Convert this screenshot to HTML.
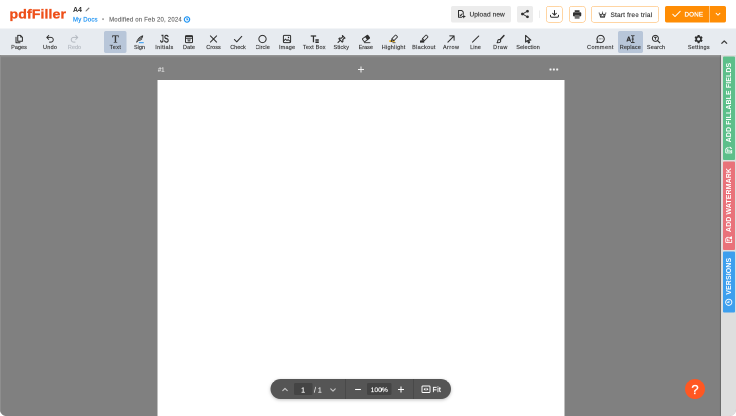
<!DOCTYPE html>
<html lang="en">
<head>
<meta charset="utf-8">
<title>pdfFiller</title>
<style>
html,body{margin:0;padding:0;width:736px;height:416px;overflow:hidden;background:#fff;}
#app{-webkit-text-stroke:.3px currentColor;will-change:transform;position:absolute;left:0;top:0;width:1472px;height:832px;transform:scale(.5);transform-origin:0 0;font-family:"Liberation Sans",sans-serif;color:#333;overflow:hidden;background:#808080;border-radius:0 0 13px 13px;}
#app *{box-sizing:border-box;}
.a{position:absolute;}
svg{display:block;overflow:visible;}
/* header */
#header{position:absolute;left:0;top:0;width:1472px;height:57px;background:#fff;}
#logo{position:absolute;left:19px;top:13.400px;font-size:26px;line-height:30px;font-weight:bold;letter-spacing:.200px;transform:scaleX(1.085);transform-origin:0 0;-webkit-text-stroke:.600px #ee4f19;color:#ee4f19;white-space:nowrap;}
#docname{position:absolute;left:146px;top:10px;font-size:14px;line-height:18px;font-weight:bold;color:#2b2b2b;white-space:nowrap;-webkit-text-stroke:0;}
#crumbs{position:absolute;left:146px;top:31px;font-size:12px;line-height:16px;white-space:nowrap;color:#6a6a6a;letter-spacing:.400px;}
#crumbs .lnk{color:#1a92f4;-webkit-text-stroke:.400px #1a92f4;}
#crumbs .dot{color:#9a9a9a;margin:0 10px 0 8.500px;letter-spacing:0}
.btn{position:absolute;top:12px;height:32.500px;border-radius:4px;background:#ececec;}
.btn.o{background:#fff;border:1.800px solid #ffac48;border-radius:5.500px;}
.btn span{position:absolute;top:9px;font-size:13px;line-height:16px;white-space:nowrap;color:#333;}
/* toolbar */
#toolbar{position:absolute;left:0;top:57px;width:1472px;height:52.500px;background:#e7ebf0;border-bottom:1px solid #eef1f5;}
.sel{position:absolute;top:5px;height:44px;border-radius:4px;background:#b8c6d9;}
.ti{position:absolute;top:0;width:0;height:52px;}
.ti svg{position:absolute;left:-9px;top:12px;width:18px;height:18px;}
.ti b{position:absolute;left:-60px;width:120px;top:31px;text-align:center;font-weight:normal;font-size:11px;line-height:12px;letter-spacing:.35px;color:#333;white-space:nowrap;}
.ti.dis b{color:#b3b8c0;}
.s{fill:none;stroke:#2e2e2e;stroke-width:2;stroke-linecap:round;stroke-linejoin:round;}
.f{fill:#2e2e2e;stroke:none;}
/* workspace */
#ws{position:absolute;left:0;top:109.500px;width:1443px;height:723px;background:#808080;box-shadow:inset 0 4px 4px -2px rgba(255,255,255,.250);}
#ledge{position:absolute;left:0;top:109.500px;width:2px;height:723px;background:#8e8e8e;}
#page{position:absolute;left:314.500px;top:159.600px;width:814px;height:700px;background:#fff;}
#pnum{position:absolute;left:316px;top:132px;font-size:11.5px;line-height:14px;color:#ededed;}
/* right panel */
#rp{position:absolute;left:1442px;top:109.500px;width:30px;height:723px;background:#dedede;box-shadow:-1px 0 2px rgba(0,0,0,.35);}
.tab{position:absolute;left:1446px;width:24px;border-radius:2px;}
.tab div{position:absolute;left:0;top:100%;height:24px;transform:rotate(-90deg);transform-origin:0 0;display:flex;align-items:center;justify-content:center;padding-bottom:1px;color:#fff;font-weight:bold;font-size:14px;line-height:23px;-webkit-text-stroke:0;letter-spacing:.200px;white-space:nowrap;}
.tab svg{width:15px;height:15px;margin-right:8px;flex:none;}
/* bottom bar */
#bb{position:absolute;left:541px;top:758px;width:361px;height:40px;border-radius:20px;background:#555;box-shadow:0 2px 6px rgba(0,0,0,.25);color:#fff;}
#bb .box{position:absolute;top:8px;height:24px;border-radius:3px;background:#444;text-align:center;font-size:14px;line-height:24px;}
#bb .box i{font-style:normal;position:relative;top:1.500px;}
#bb .dv{position:absolute;top:0;width:2px;height:40px;background:#494949;}
#bb .t{position:absolute;top:9.500px;font-size:14px;line-height:24px;white-space:nowrap;}
.w{fill:none;stroke:#fff;stroke-width:2.100;stroke-linecap:butt;stroke-linejoin:round;}
#help{position:absolute;left:1370px;top:758px;width:40px;height:40px;border-radius:20px;background:#ff5722;color:#fff;font-size:26px;line-height:43px;text-align:center;-webkit-text-stroke:.700px #fff;}
</style>
</head>
<body>
<div id="app">

<div id="ws"></div>
<div id="ledge"></div>
<div id="pnum">#1</div>
<svg class="a" style="left:715px;top:132px;width:14px;height:14px" viewBox="0 0 14 14"><path d="M7 1v12M1 7h12" stroke="#f2f2f2" stroke-width="2" fill="none"/></svg>
<svg class="a" style="left:1099px;top:137px;width:18px;height:4px" viewBox="0 0 18 4"><rect x="0" y="0" width="4" height="4" rx="1" fill="#f2f2f2"/><rect x="6.7" y="0" width="4" height="4" rx="1" fill="#f2f2f2"/><rect x="13.4" y="0" width="4" height="4" rx="1" fill="#f2f2f2"/></svg>
<div id="page"></div>

<div id="rp"></div>
<div class="tab" style="top:113px;height:207px;background:#5cbf8a"><div style="width:207px">
<svg viewBox="0 0 14 14"><path d="M2 1.5h7l2.5 2.5v3M2 1.5v11h5.5M4 5h5M4 7.5h4M4 10h2.5" fill="none" stroke="#fff" stroke-width="1.700"/><path d="M9 13l.5-2.2 3-3 1.6 1.6-3 3z" fill="#fff"/></svg>ADD FILLABLE FIELDS</div></div>
<div class="tab" style="top:323px;height:177px;background:#e9727a"><div style="width:177px">
<svg viewBox="0 0 14 14"><path d="M2 1.5h7l2.5 2.5v3M2 1.5v11h4.5M4 5h5M4 7.5h3" fill="none" stroke="#fff" stroke-width="1.700"/><path d="M10.5 6.5l3.3 6.5H7.2z" fill="#fff"/></svg>ADD WATERMARK</div></div>
<div class="tab" style="top:503px;height:122px;background:#3d9fee"><div style="width:122px">
<svg viewBox="0 0 14 14"><circle cx="7" cy="7" r="5.800" fill="none" stroke="#fff" stroke-width="1.700"/><path d="M7 3.600V7.400H9.800" fill="none" stroke="#fff" stroke-width="1.700"/></svg>VERSIONS</div></div>

<div id="header">
  <div id="logo">pdfFiller</div>
  <div id="docname">A4</div>
  <svg class="a" style="left:170px;top:14px;width:10px;height:10px" viewBox="0 0 10 10"><path d="M1 9l.500-2.100L7.600 .800l1.600 1.600-6.100 6.100z" fill="#777"/></svg>
  <div id="crumbs"><span class="lnk">My Docs</span><span class="dot">•</span>Modified on Feb 20, 2024</div>
  <svg class="a" style="left:367.300px;top:32px;width:14px;height:14px" viewBox="0 0 14 14"><circle cx="7" cy="7" r="5.300" fill="none" stroke="#1a92f4" stroke-width="2.300"/><path d="M7 3.800V7.400H9.600" fill="none" stroke="#1a92f4" stroke-width="2"/></svg>

  <div class="btn" style="left:902px;width:120px">
    <svg class="a" style="left:12px;top:7px;width:18px;height:18px" viewBox="0 0 18 18"><path class="s" d="M9.5 15.5H3V2h6.5l3 3v4.5M6 11l1.5 1.5L10 9M13.5 11.5v5M11 14h5"/></svg>
    <span style="left:37px;letter-spacing:.2px">Upload new</span>
  </div>
  <div class="btn" style="left:1034px;width:32px">
    <svg class="a" style="left:7px;top:7px;width:18px;height:18px" viewBox="0 0 18 18"><path class="s" style="stroke-width:1.700" d="M12.500 4L5 8.500M5 9.500L12.500 14"/><circle class="f" cx="14" cy="3.400" r="2.700"/><circle class="f" cx="3.800" cy="9" r="2.700"/><circle class="f" cx="14" cy="14.600" r="2.700"/></svg>
  </div>
  <div class="a" style="left:1078px;top:21px;width:1px;height:15px;background:#d9d9d9"></div>
  <div class="btn o" style="left:1092px;width:32.500px">
    <svg class="a" style="left:6px;top:6px;width:20px;height:18px" viewBox="0 0 20 18"><path class="s" d="M10 2v9M6.300 7.600L10 11.300L13.700 7.600M2 11.500v1.500a2.500 2.500 0 0 0 2.500 2.500h11A2.500 2.500 0 0 0 18 13v-1.500"/></svg>
  </div>
  <div class="btn o" style="left:1138px;width:32.500px">
    <svg class="a" style="left:6.500px;top:6.500px;width:16.500px;height:17.500px" viewBox="0 0 17 18"><path class="f" d="M3.500 .500h10v3.500h-10z"/><rect class="f" x="0" y="4.500" width="17" height="8.500" rx="2"/><path d="M3.500 10h10v8h-10z" fill="#6f6f6f"/></svg>
  </div>
  <div class="btn o" style="left:1182px;width:136px">
    <svg class="a" style="left:14px;top:9.500px;width:16px;height:13px" viewBox="0 0 16 13"><path class="s" style="stroke-width:1.700" d="M2.400 4.800l1.700 6.700h7.800l1.700-6.700-3.300 2.700L8 3.600 5.700 7.500z"/><path class="s" style="stroke-width:2.400;stroke-linecap:butt" d="M3.800 10.800h8.400"/><circle class="f" cx="8" cy="1.300" r="1.100"/><circle class="f" cx="1.300" cy="3" r="1.100"/><circle class="f" cx="14.700" cy="3" r="1.100"/></svg>
    <span style="left:38px;letter-spacing:.34px">Start free trial</span>
  </div>
  <div class="btn" style="left:1330px;width:89px;background:#ff8d04;border-radius:4px 0 0 4px">
    <svg class="a" style="left:14px;top:9px;width:18px;height:14px" viewBox="0 0 18 14"><path d="M1.500 7.500L6 12L16.500 1.500" fill="none" stroke="#fff" stroke-width="1.900" stroke-linecap="round" stroke-linejoin="round"/></svg>
    <span style="left:39px;color:#fff;font-size:12.500px;letter-spacing:.300px;-webkit-text-stroke:.500px #fff">DONE</span>
  </div>
  <div class="btn" style="left:1420px;width:32px;background:#ff8d04;border-radius:0 4px 4px 0">
    <svg class="a" style="left:11px;top:13px;width:10px;height:7px" viewBox="0 0 10 7"><path d="M1.200 1.500L5 5.300L8.800 1.500" fill="none" stroke="#fff" stroke-width="1.900" stroke-linecap="round" stroke-linejoin="round"/></svg>
  </div>
</div>

<div id="toolbar">
  <div class="sel" style="left:208px;width:45px"></div>
  <div class="sel" style="left:1236px;width:49.500px"></div>
  <div class="ti" style="left:38px"><svg viewBox="0 0 18 18"><path class="s" d="M6.500 1.800h5.500l3.800 3.800v7.900H6.500zM3 5.500v11h8"/><path class="f" d="M11.500 1.800l4.300 4.300h-4.300z"/></svg><b style="letter-spacing:0.05px;text-indent:0.05px">Pages</b></div>
  <div class="ti" style="left:100px"><svg viewBox="0 0 18 18"><path class="s" style="stroke-width:1.900" d="M6.500 1.800L2.500 5.800l4 4M2.500 5.800h8.300a4.700 4.700 0 0 1 0 9.400H8"/></svg><b style="letter-spacing:0.53px;text-indent:0.53px">Undo</b></div>
  <div class="ti dis" style="left:149px"><svg viewBox="0 0 18 18"><path class="s" style="stroke:#b3b8c0;stroke-width:1.900" d="M11.500 1.800l4 4-4 4M15.500 5.800H7.200a4.700 4.700 0 0 0 0 9.400H10"/></svg><b style="letter-spacing:0.00px;text-indent:0.00px">Redo</b></div>
  <div class="ti" style="left:230.500px"><svg viewBox="0 0 18 18"><text x="9" y="16.200" text-anchor="middle" font-family="Liberation Serif, serif" font-size="21" fill="#333" stroke="#333" stroke-width=".700">T</text></svg><b style="letter-spacing:0.80px;text-indent:0.80px">Text</b></div>
  <div class="ti" style="left:279px"><svg viewBox="0 0 18 18"><path class="f" d="M2.300 15.800C4 10 8 4 16.200 1.500c.300 3-.800 5.300-2.600 6.900l1.300.4c-1.600 2.600-4.400 3.800-7.800 3.600L3.600 16.200z"/><path d="M4.500 13L13 4.500M8 9.500h4.500M10 7.200h4" stroke="#e7ebf0" stroke-width=".800" fill="none"/><path d="M7.800 16.400h9.600" stroke="#1e90f0" stroke-width="1.900" fill="none"/></svg><b style="letter-spacing:0.00px;text-indent:0.00px">Sign</b></div>
  <div class="ti" style="left:328.500px"><svg viewBox="0 0 18 18"><text x="9" y="16.300" text-anchor="middle" font-family="Liberation Sans, sans-serif" font-size="21.500" textLength="17.500" lengthAdjust="spacingAndGlyphs" fill="#2e2e2e" stroke="#2e2e2e" stroke-width=".900">JS</text></svg><b style="letter-spacing:0.67px;text-indent:0.67px">Initials</b></div>
  <div class="ti" style="left:378px"><svg viewBox="0 0 18 18"><rect class="s" x="2" y="2.200" width="14" height="14" rx="1.600"/><path class="f" d="M2 2.200h14v3.300H2z"/><path class="s" style="stroke-width:1.600;stroke-linecap:butt" d="M2 8h14M5.500 10.800h7M7.500 10.800v3.500M10.500 10.800v3.500"/></svg><b style="letter-spacing:0.18px;text-indent:0.18px">Date</b></div>
  <div class="ti" style="left:427px"><svg viewBox="0 0 18 18"><path class="s" d="M2.800 2.800l12.400 12.400M15.200 2.800L2.800 15.200"/></svg><b style="letter-spacing:0.09px;text-indent:0.09px">Cross</b></div>
  <div class="ti" style="left:476px"><svg viewBox="0 0 18 18"><path class="s" d="M1.800 10l4.700 4.700L16.500 3.800"/></svg><b style="letter-spacing:0.00px;text-indent:0.00px">Check</b></div>
  <div class="ti" style="left:525px"><svg viewBox="0 0 18 18"><circle class="s" cx="9" cy="9" r="7.300"/></svg><b style="letter-spacing:0.20px;text-indent:0.20px">Circle</b></div>
  <div class="ti" style="left:574px"><svg viewBox="0 0 18 18"><rect class="s" x="1.800" y="1.800" width="14.400" height="14.400" rx="2"/><path class="s" style="stroke-width:1.800" d="M2.200 13l3.800-3.800 3 3 2-2 4.800 3.800"/><circle class="f" cx="12" cy="6" r="1.400"/></svg><b style="letter-spacing:0.38px;text-indent:0.38px">Image</b></div>
  <div class="ti" style="left:628.500px"><svg viewBox="0 0 18 18"><path class="s" style="stroke-width:2.500;stroke-linecap:butt" d="M1.500 3h10.800M6.900 3v12.500"/><path class="s" style="stroke-width:2.100;stroke-linecap:butt" d="M10.800 10.600h6.800M10.800 13.300h6.800M10.800 16h6.800"/></svg><b style="letter-spacing:0.44px;text-indent:0.44px">Text Box</b></div>
  <div class="ti" style="left:682.500px"><svg viewBox="0 0 18 18"><path class="s" style="stroke-width:2.200" d="M10.800 2l5.200 5.200-1.800.4-2.700 2.700.3 3.700-1.300 1.300L3.700 8.500 5 7.200l3.700.3 2.700-2.700zM6.800 11.200L2 16"/></svg><b style="letter-spacing:0.29px;text-indent:0.29px">Sticky</b></div>
  <div class="ti" style="left:731.500px"><svg viewBox="0 0 18 18"><g transform="rotate(-36 9 8)"><rect class="s" style="stroke-width:1.800" x="2.300" y="4.200" width="13.400" height="7.600" rx="1.600"/><path class="f" d="M9.300 4.200h5.400a1 1 0 0 1 1 1v5.600a1 1 0 0 1-1 1H9.300z"/></g><path class="s" style="stroke-width:1.700" d="M5.500 16.300h11.500"/></svg><b style="letter-spacing:0.00px;text-indent:0.00px">Erase</b></div>
  <div class="ti" style="left:787px"><svg viewBox="0 0 18 18"><path d="M.500 11.300h11v3.800h-11z" fill="#fbc02d"/><path d="M7 16.500h6" stroke="#2e2e2e" stroke-width="1.500" fill="none"/><path class="s" style="stroke-width:1.700" d="M12.400 1.500a1.200 1.200 0 0 1 1.700 0l2.400 2.400a1.200 1.200 0 0 1 0 1.700L9.700 12.400l-3.500.500-1.300 1.300-1-1 1.300-1.300.5-3.500zM6.200 8.500l3.300 3.300"/></svg><b style="letter-spacing:0.55px;text-indent:0.55px">Highlight</b></div>
  <div class="ti" style="left:847.500px"><svg viewBox="0 0 18 18"><path d="M1 12h8.500v4.300H1z" fill="#2e2e2e"/><path class="s" style="stroke-width:1.700" d="M12.400 1.500a1.200 1.200 0 0 1 1.700 0l2.400 2.400a1.200 1.200 0 0 1 0 1.700L9.700 12.400l-3.500.500-1.300 1.300-1-1 1.300-1.300.5-3.500zM6.200 8.500l3.300 3.300"/></svg><b style="letter-spacing:0.63px;text-indent:0.63px">Blackout</b></div>
  <div class="ti" style="left:902px"><svg viewBox="0 0 18 18"><path class="s" d="M2.800 15.200L15 3M6.500 2.800h8.700v8.700"/></svg><b style="letter-spacing:0.84px;text-indent:0.84px">Arrow</b></div>
  <div class="ti" style="left:951px"><svg viewBox="0 0 18 18"><path class="s" d="M3 15.200L15.500 3"/></svg><b style="letter-spacing:0.20px;text-indent:0.20px">Line</b></div>
  <div class="ti" style="left:1000.500px"><svg viewBox="0 0 18 18"><path class="s" style="stroke-width:3.100" d="M15.800 2.200L9.300 9.200"/><path class="s" style="stroke-width:1.900" d="M6.500 10a3.200 3.200 0 0 1 3 3.200c0 2.500-3 3.500-7.500 3.300 1.500-1 1.300-2.200 1.500-3.500A3.200 3.200 0 0 1 6.500 10z"/></svg><b style="letter-spacing:0.91px;text-indent:0.91px">Draw</b></div>
  <div class="ti" style="left:1056px"><svg viewBox="0 0 18 18"><path class="s" style="stroke-width:2.100" d="M4.200 1.800v13.400l3.500-3.200 2.300 5 2.200-1-2.300-4.800h4.800z"/></svg><b style="letter-spacing:0.24px;text-indent:0.24px">Selection</b></div>
  <div class="ti" style="left:1200.500px"><svg viewBox="0 0 18 18"><path class="s" d="M9.300 1.800a7.200 7.200 0 1 1-3.600 13.430L1.800 16.200l1.100-3.700A7.200 7.200 0 0 1 9.300 1.800z"/><circle cx="6.500" cy="8.800" r="1" fill="#555"/><circle cx="9.300" cy="8.800" r="1" fill="#555"/><circle cx="12.100" cy="8.800" r="1" fill="#555"/></svg><b style="letter-spacing:0.85px;text-indent:0.85px">Comment</b></div>
  <div class="ti" style="left:1260.500px"><svg viewBox="0 0 18 18"><path class="s" style="stroke-width:2.200;stroke-linecap:butt;stroke-linejoin:miter" d="M1.800 14.200L5.100 5h.800l3.300 9.200M3 11.300h5"/><path class="s" style="stroke-width:1.800" d="M10.800 2.300h1.200a1.600 1.600 0 0 1 1.600 1.600 1.600 1.600 0 0 1 1.600-1.600h1.200M10.800 16h1.200a1.600 1.600 0 0 0 1.600-1.600 1.600 1.600 0 0 0 1.600 1.600h1.200M13.600 3.800v10.700M12.200 9.200h2.800"/></svg><b style="letter-spacing:0.29px;text-indent:0.29px">Replace</b></div>
  <div class="ti" style="left:1312px"><svg viewBox="0 0 18 18"><circle class="s" cx="7.800" cy="7.800" r="6"/><path class="s" style="stroke-width:2.300" d="M12.500 12.500l4 4"/><path class="s" style="stroke-width:1.800;stroke-linecap:butt" d="M5 5.500h5.600M7.800 5.500v5"/></svg><b style="letter-spacing:0.29px;text-indent:0.29px">Search</b></div>
  <div class="ti" style="left:1397.500px"><svg style="left:-8.200px;top:13px;width:16.400px;height:16.400px" viewBox="2.400 2.400 19.200 19.200"><path class="f" d="M19.140 12.940c.04-.3.060-.61.060-.94 0-.32-.02-.64-.07-.94l2.030-1.580c.18-.14.230-.41.120-.61l-1.920-3.320c-.12-.22-.37-.29-.59-.22l-2.390.96c-.5-.38-1.030-.7-1.620-.94l-.36-2.540c-.04-.24-.24-.41-.48-.41h-3.840c-.24 0-.43.170-.47.410l-.36 2.540c-.59.240-1.130.570-1.620.940l-2.390-.96c-.22-.08-.47 0-.59.220L2.740 8.870c-.12.210-.08.470.12.610l2.030 1.580c-.05.300-.09.630-.09.940s.02.640.07.940l-2.030 1.580c-.18.140-.23.410-.12.610l1.920 3.320c.12.220.37.290.59.220l2.390-.96c.5.380 1.030.7 1.620.94l.36 2.540c.05.240.24.410.48.410h3.840c.24 0 .44-.17.470-.41l.36-2.540c.59-.24 1.130-.56 1.620-.94l2.390.96c.22.080.47 0 .59-.22l1.920-3.320c.12-.22.070-.47-.12-.61l-2.010-1.580zM12 15.600c-1.980 0-3.600-1.620-3.600-3.600s1.620-3.600 3.600-3.600 3.600 1.620 3.600 3.600-1.620 3.600-3.600 3.600z"/></svg><b style="letter-spacing:0.54px;text-indent:0.54px">Settings</b></div>
  <svg class="a" style="left:1441.500px;top:22.500px;width:13px;height:8px" viewBox="0 0 13 8"><path d="M1.600 6.700L6.500 1.800l4.900 4.900" fill="none" stroke="#3a3a3a" stroke-width="2.400" stroke-linecap="round" stroke-linejoin="round"/></svg>
</div>

<div id="bb">
  <svg class="a" style="left:22.500px;top:17px;width:12px;height:8px" viewBox="0 0 12 8"><path d="M1.500 6.300L6 1.800L10.500 6.300" fill="none" stroke="#c4c4c4" stroke-width="2.300" stroke-linecap="round" stroke-linejoin="round"/></svg>
  <div class="box" style="left:47px;width:36.500px"><i>1</i></div>
  <div class="t" style="left:87px;color:#ececec">/ 1</div>
  <svg class="a" style="left:118.500px;top:17.500px;width:12px;height:8px" viewBox="0 0 12 8"><path d="M1.500 1.700L6 6.200L10.500 1.700" fill="none" stroke="#c4c4c4" stroke-width="2.300" stroke-linecap="round" stroke-linejoin="round"/></svg>
  <div class="dv" style="left:149px"></div>
  <svg class="a" style="left:168px;top:13.500px;width:14px;height:14px" viewBox="0 0 14 14"><path class="w" d="M1.200 7h11.600"/></svg>
  <div class="box" style="left:193px;width:49px;font-size:13.500px"><i>100%</i></div>
  <svg class="a" style="left:254px;top:13.500px;width:14px;height:14px" viewBox="0 0 14 14"><path class="w" d="M1 7h12M7 1v12"/></svg>
  <div class="dv" style="left:285px"></div>
  <svg class="a" style="left:302px;top:13px;width:18px;height:15px" viewBox="0 0 18 15"><rect x="1" y="1" width="16" height="13" rx="1.500" fill="none" stroke="#fff" stroke-width="1.900"/><path d="M7.800 4.200v6.600L4.200 7.500zM10.200 4.200v6.600l3.600-3.300z" fill="#fff"/></svg>
  <div class="t" style="left:324px;top:8.500px;font-size:14px;letter-spacing:.600px;-webkit-text-stroke:.500px #fff">Fit</div>
</div>

<div id="help">?</div>

</div>
</body>
</html>
